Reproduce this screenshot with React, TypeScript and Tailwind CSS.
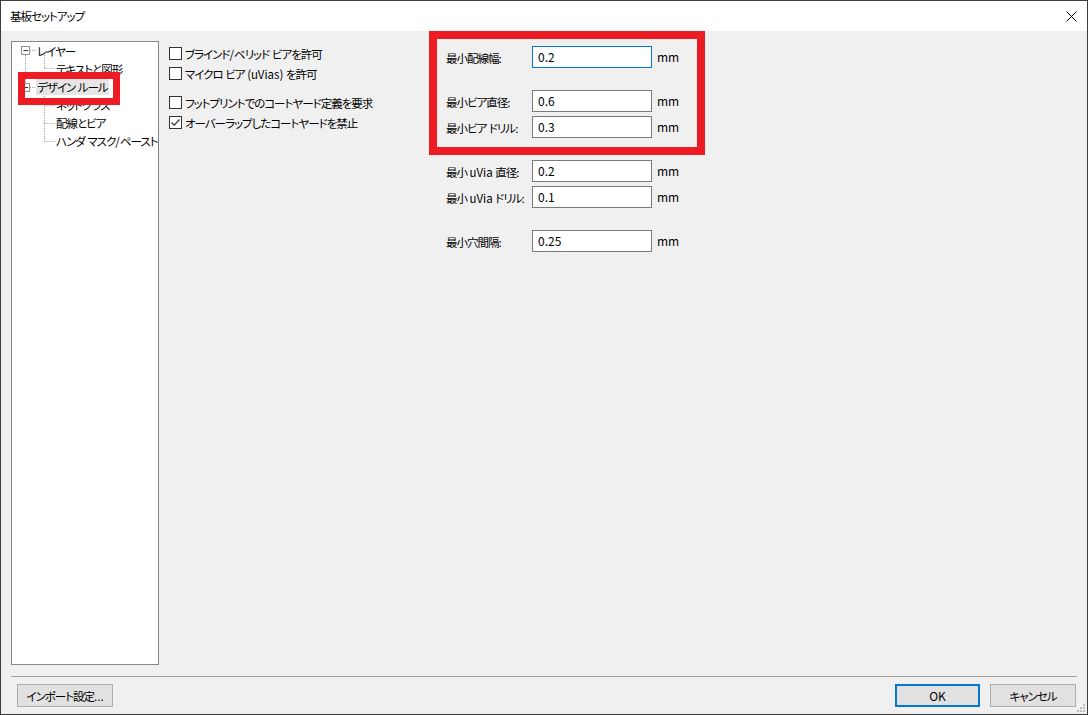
import React from "react";

const FONT = "font-['Yu_Gothic_UI','Meiryo_UI','Noto_Sans_CJK_JP',sans-serif] [font-feature-settings:'palt']";

// Japanese runs get tight tracking, ASCII runs stay normal
function T({ text }: { text: string }) {
  const parts = text.split(/([\x20-\x7e]+)/).filter((p) => p !== "");
  return (
    <span className="text-[11.5px] leading-[16px]">
      {parts.map((p, i) =>
        /^[\x20-\x7e]+$/.test(p) ? (
          <span key={i} className="whitespace-pre tracking-normal">
            {p}
          </span>
        ) : (
          <span key={i} className="tracking-[-1px]">
            {p}
          </span>
        )
      )}
    </span>
  );
}

function Checkbox({ label, checked }: { label: string; checked?: boolean }) {
  return (
    <div className="flex h-[20px] items-center">
      <span className="flex h-[13px] w-[13px] shrink-0 items-center justify-center border border-[#333333] bg-white">
        {checked ? (
          <svg width="11" height="11" viewBox="0 0 11 11">
            <path d="M1.5 5.5 L4.2 8.2 L9.5 2.5" fill="none" stroke="#333" strokeWidth="1.2" />
          </svg>
        ) : null}
      </span>
      <span className="ml-[3px] -mt-[2px] whitespace-nowrap text-black">
        <T text={label} />
      </span>
    </div>
  );
}

function Field({ label, value, focused }: { label: string; value: string; focused?: boolean }) {
  return (
    <div className="flex h-[22px] items-center">
      <span className="mb-[3px] w-[86px] whitespace-nowrap text-black">
        <T text={label} />
      </span>
      <div
        className={
          "flex h-[22px] w-[120px] items-center bg-white px-[5px] text-[12px] text-black " +
          (focused ? "border border-[#0078d7]" : "border border-[#7a7a7a]")
        }
      >
        {value}
      </div>
      <span className="ml-[5px] text-[12px] text-black">mm</span>
    </div>
  );
}

function TreePanel() {
  const rows: { label: string; level: number; selected?: boolean }[] = [
    { label: "レイヤー", level: 0 },
    { label: "テキストと図形", level: 1 },
    { label: "デザイン ルール", level: 0, selected: true },
    { label: "ネットクラス", level: 1 },
    { label: "配線とビア", level: 1 },
    { label: "ハンダ マスク/ペースト", level: 1 },
  ];
  return (
    <div className="relative h-[624px] w-[148px] shrink-0 border border-[#828790] bg-white">
      <svg className="pointer-events-none absolute left-0 top-0" width="146" height="120">
        <g stroke="#a0a0a0" strokeDasharray="1 1" fill="none">
          <line x1="13.5" y1="13" x2="13.5" y2="41" />
          <line x1="18" y1="8.5" x2="24" y2="8.5" />
          <line x1="32.5" y1="13" x2="32.5" y2="26.5" />
          <line x1="32.5" y1="26.5" x2="43" y2="26.5" />
          <line x1="18" y1="45.5" x2="24" y2="45.5" />
          <line x1="32.5" y1="54" x2="32.5" y2="99.5" />
          <line x1="32.5" y1="63.5" x2="43" y2="63.5" />
          <line x1="32.5" y1="81.5" x2="43" y2="81.5" />
          <line x1="32.5" y1="99.5" x2="43" y2="99.5" />
        </g>
        <g>
          <rect x="9.5" y="4.5" width="8" height="8" fill="white" stroke="#919191" />
          <line x1="11.5" y1="8.5" x2="16" y2="8.5" stroke="#333" />
          <rect x="9.5" y="41.5" width="8" height="8" fill="white" stroke="#919191" />
          <line x1="11.5" y1="45.5" x2="16" y2="45.5" stroke="#333" />
        </g>
      </svg>
      <div className="relative flex flex-col">
        {rows.map((r) => (
          <div
            key={r.label}
            className={"flex h-[18px] items-center " + (r.level === 0 ? "pl-[24px]" : "pl-[43px]")}
          >
            <span
              className={
                "flex h-[16px] items-center whitespace-nowrap px-[1px] text-black" +
                (r.selected ? " bg-[#e5e5e5]" : "")
              }
            >
              <T text={r.label} />
            </span>
          </div>
        ))}
      </div>
    </div>
  );
}

export default function App() {
  return (
    <div className={"relative h-[715px] w-[1088px] overflow-hidden border border-[#3c3c3c] bg-[#f0f0f0] " + FONT}>
      <div className="flex h-[30px] items-center justify-between bg-white pl-[9px] pr-[10px]">
        <span className="mb-[4px] text-black">
          <T text="基板セットアップ" />
        </span>
        <svg width="11" height="11" viewBox="0 0 11 11">
          <path d="M0.5 0.5 L10.5 10.5 M10.5 0.5 L0.5 10.5" stroke="#000" strokeWidth="1" />
        </svg>
      </div>

      <div className="flex h-[683px] flex-col px-[10px] pt-[10px]">
        <div className="flex">
          <TreePanel />
          <div className="ml-[10px] w-[258px] pt-[2px]">
            <Checkbox label="ブラインド/ベリッド ビアを許可" />
            <Checkbox label="マイクロ ビア (uVias) を許可" />
            <div className="mt-[9px]">
              <Checkbox label="フットプリントでのコートヤード定義を要求" />
              <Checkbox label="オーバーラップしたコートヤードを禁止" checked />
            </div>
          </div>
          <div className="flex flex-col pl-[19px] pt-[5px]">
            <Field label="最小配線幅:" value="0.2" focused />
            <div className="mt-[22px] flex flex-col gap-[4px]">
              <Field label="最小ビア直径:" value="0.6" />
              <Field label="最小ビア ドリル:" value="0.3" />
            </div>
            <div className="mt-[22px] flex flex-col gap-[4px]">
              <Field label="最小 uVia 直径:" value="0.2" />
              <Field label="最小 uVia ドリル:" value="0.1" />
            </div>
            <div className="mt-[22px]">
              <Field label="最小穴間隔:" value="0.25" />
            </div>
          </div>
        </div>

        <div className="mt-[11px] h-[2px] border-t border-[#a0a0a0] border-b-white" />

        <div className="mt-[6px] flex items-center">
          <button
            type="button"
            className="ml-[6px] flex h-[23px] w-[96px] items-center justify-center border border-[#adadad] bg-[#e1e1e1] text-black"
          >
            <T text="インポート設定..." />
          </button>
          <div className="ml-auto mr-[1px] flex gap-[10px]">
            <button
              type="button"
              className="flex h-[23px] w-[85px] items-center justify-center border-2 border-[#0078d7] bg-[#e1e1e1] text-[12px] text-black"
            >
              OK
            </button>
            <button
              type="button"
              className="flex h-[23px] w-[86px] items-center justify-center border border-[#adadad] bg-[#e1e1e1] text-black"
            >
              <T text="キャンセル" />
            </button>
          </div>
        </div>
      </div>

      <svg className="absolute bottom-[1px] right-[1px]" width="10" height="10" viewBox="0 0 10 10">
        <g fill="#bcbcbc">
          <rect x="7" y="1" width="2" height="2" />
          <rect x="4" y="4" width="2" height="2" />
          <rect x="7" y="4" width="2" height="2" />
          <rect x="1" y="7" width="2" height="2" />
          <rect x="4" y="7" width="2" height="2" />
          <rect x="7" y="7" width="2" height="2" />
        </g>
      </svg>

      <div className="pointer-events-none absolute left-[17px] top-[71px] h-[33px] w-[102px] border-[7px] border-[#ed1c24]" />
      <div className="pointer-events-none absolute left-[428px] top-[30px] h-[124px] w-[276px] border-[8px] border-[#ed1c24]" />
    </div>
  );
}
